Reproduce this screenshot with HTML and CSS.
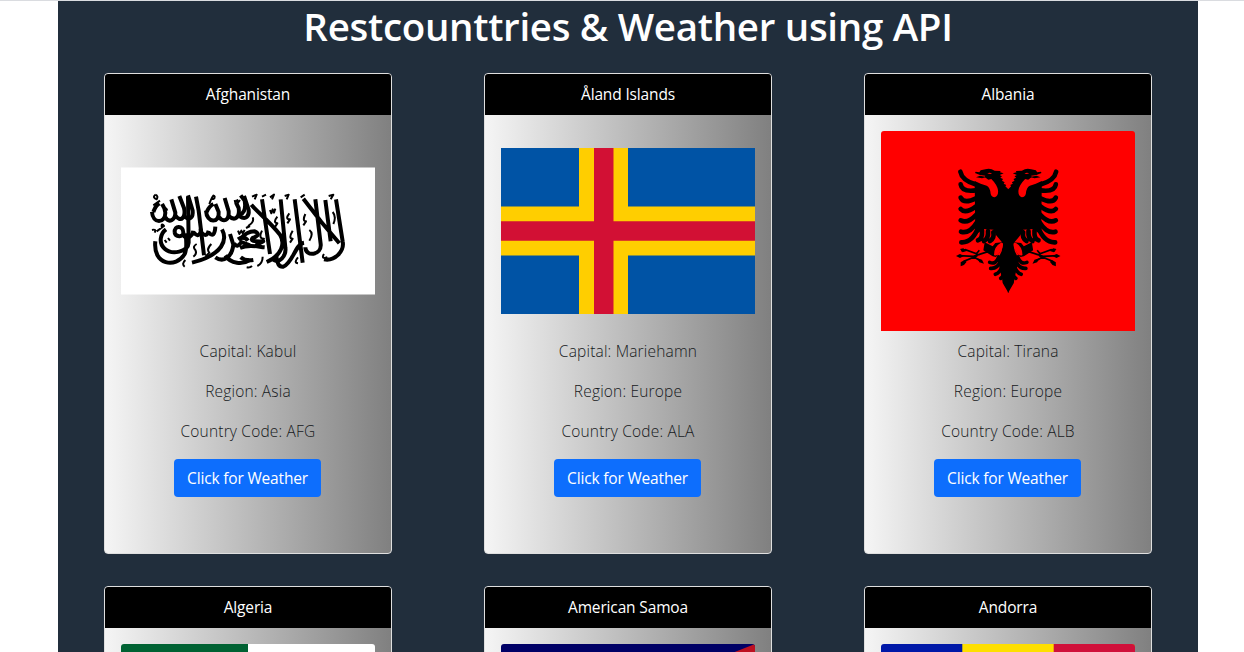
FILE: index.html
```html
<!DOCTYPE html>
<html lang="en">
<head>
<meta charset="utf-8">
<title>Restcounttries &amp; Weather using API</title>
<link rel="stylesheet" href="styles.css">
</head>
<body>
<main class="container">
  <h1 class="title">Restcounttries &amp; Weather using API</h1>
  <div class="grid">
    <article class="card">
      <h2 class="card-header">Afghanistan</h2>
      <div class="card-body">
        <svg class="flag" viewBox="121 167.5 254 127">
          <rect x="121" y="167.5" width="254" height="127" fill="#fff"/>
          <g class="ink" transform="translate(140 180) scale(.33333)">
            <path d="M36 96C38 132 76 132 76 98C76 86 70 78 66 72M58 70Q46 78 40 96M76 112C88 132 106 118 106 98L94 58M106 106C124 132 138 108 132 84L118 48M134 110C150 122 160 112 158 92L144 46"/>
            <path d="M198 92C200 132 240 130 236 96L226 72M220 72Q208 78 200 96M236 110C252 130 268 120 266 94L254 54M266 108C286 126 300 110 296 84L288 68M298 108C318 122 328 108 326 90L312 48"/>
            <path d="M168 50L176 92L192 226M144 50L146 188C144 216 96 226 74 206C54 188 62 160 78 148M46 184C38 256 108 266 134 222C142 206 138 196 138 160"/>
            <path d="M104 158C102 134 130 136 130 158C130 174 106 170 104 158M132 168C144 180 158 166 160 152M162 158Q174 174 182 156L182 146M184 158Q200 174 206 152M206 158Q224 176 226 140"/>
            <path d="M246 148C262 178 252 224 156 248M226 232C252 250 276 230 280 194L270 162M282 190Q292 206 304 186L330 196M294 178Q312 166 324 182M256 226C272 252 308 254 330 240"/>
            <path class="fine" d="M46 44Q36 52 50 58Q56 48 46 44M40 76L60 62M36 150Q50 146 44 158M50 154L72 138Q62 126 66 146M74 180L80 188M84 174L90 182M78 84L82 92M170 192Q156 200 166 210Q172 222 160 230M136 240Q124 252 134 260M214 192Q198 208 208 218L196 230M208 72Q220 38 224 50Q224 60 212 56M284 60L286 68L292 60L294 68L300 60M294 152L298 162L304 152L308 160L314 150M318 144L330 138"/>
          </g>
          <g class="ink" transform="translate(240 180) scale(.33333)">
            <path d="M34 74C52 96 88 124 120 164C136 190 126 226 80 246M66 58L90 222M122 58L136 202C140 228 116 254 98 238M164 58L188 248M190 56L244 126L298 190M226 58L242 192C246 226 196 232 196 202M256 60L272 184M288 58L308 184C314 214 284 244 252 238"/>
            <path d="M192 188C166 192 158 250 130 260C112 262 112 242 108 226M0 104Q20 96 14 62L2 46M0 178Q20 154 44 154Q66 164 38 174Q26 186 70 184L48 196M0 204C26 192 52 200 74 202M2 232Q16 244 40 240"/>
            <path class="fine" d="M36 50L50 44L44 58M66 50L78 44M90 52L102 44L96 58M134 48L146 44L140 58M182 52L194 44M266 48L280 44L272 58M90 90L94 100L98 88L102 98L106 86M112 110Q98 128 112 130L104 142M148 100Q134 118 150 118L142 130M196 102Q186 124 198 124L190 136M158 152Q144 176 158 176L150 188M66 152Q54 176 72 176L60 190M38 112Q44 126 24 138M208 150Q222 160 208 182M278 96Q290 110 280 132M252 222Q242 238 262 232M174 232Q160 248 174 250M52 258Q68 250 68 230M20 262Q30 264 36 258"/>
          </g>
        </svg>
        <p>Capital: Kabul</p>
        <p>Region: Asia</p>
        <p>Country Code: AFG</p>
        <button class="btn">Click for Weather</button>
      </div>
    </article>
    <article class="card">
      <h2 class="card-header">Åland Islands</h2>
      <div class="card-body">
        <svg class="flag" viewBox="0 0 254 166">
          <rect width="254" height="166" fill="#0053a5"/>
          <path fill="#ffce00" d="M78 0h49v58.5h127v49H127V166H78v-58.5H0v-49h78z"/>
          <path fill="#d21034" d="M93 0h19.5v73.3H254v19.4H112.500V166H93V92.700H0V73.300h93z"/>
        </svg>
        <p>Capital: Mariehamn</p>
        <p>Region: Europe</p>
        <p>Country Code: ALA</p>
        <button class="btn">Click for Weather</button>
      </div>
    </article>
    <article class="card">
      <h2 class="card-header">Albania</h2>
      <div class="card-body">
        <svg class="flag" viewBox="881 131 254 200" preserveAspectRatio="none">
          <defs>
            <g id="eagle-half">
              <path d="M206 103L205 103L196 94L199 90L191 86L194 82L186 77L189 72L181 68L186 64L179 60L191 55L180 52L182 48L164 47Q150 38 136 43L122 46L118 52L107 50L105 54L120 60L136 62L134 66L145 74L154 72Q172 90 174 106Q176 122 164 127Q154 126 152 116Q150 96 140 92L122 86L104 78L106 240L130 222L160 224L168 240L186 262Q192 290 172 310L186 370L188 384L205 413H206Z"/>
              <path d="M134 262L158 274L166 264L186 262Q190 282 168 306L158 304L130 286Z"/>
              <path fill="#f00" d="M183 263Q162 274 162 300Q172 306 182 288Q192 274 188 264Z"/>
              <path fill="#f00" d="M142 55q6-4 14 0q-5 4-14 0z"/>
              <g class="feather">
                <path d="M61 50Q66 76 106 88M62 88Q66 112 108 106M62 128Q72 148 108 130M62 162Q76 178 108 154M62 196Q82 208 110 178M63 230Q88 238 112 200M64 262Q98 264 116 214M114 256Q128 252 126 226M132 258Q146 250 144 228M150 258Q164 250 160 232"/>
                <path d="M149 322Q168 330 176 306M152 340Q172 342 182 318M166 358Q180 354 188 330M182 370Q192 364 194 340" stroke-width="11"/>
              </g>
              <path class="claw" d="M144 290L100 304L56 302M120 300L76 284L64 288M112 302L74 318L68 328M98 304L122 318M108 298L118 286"/>
              <path d="M48 303l12-6 12 6-12 6zM60 282l10-2 10 8-12 4zM62 334l0-12 10-6 8 4-8 10zM112 310l14 4 6 12-14-4z"/>
              <path d="M120 62L108 67L126 70L140 66Z"/>
            </g>
          </defs>
          <rect x="881" y="131" width="254" height="200" fill="#f00"/>
          <g transform="translate(940 155) scale(.33333)">
            <use href="#eagle-half"/>
            <use href="#eagle-half" transform="translate(409.500 0) scale(-1 1)"/>
          </g>
        </svg>
        <p>Capital: Tirana</p>
        <p>Region: Europe</p>
        <p>Country Code: ALB</p>
        <button class="btn">Click for Weather</button>
      </div>
    </article>
    <article class="card">
      <h2 class="card-header">Algeria</h2>
      <div class="card-body">
        <svg class="flag" viewBox="0 0 254 200">
          <rect width="254" height="200" fill="#fff"/>
          <rect width="127" height="200" fill="#006233"/>
        </svg>
      </div>
    </article>
    <article class="card">
      <h2 class="card-header">American Samoa</h2>
      <div class="card-body">
        <svg class="flag" viewBox="0 0 254 200">
          <rect width="254" height="200" fill="#006"/>
          <path fill="#bd1021" d="M254 0L0 100L254 200Z"/>
          <path fill="#fff" d="M254 10L16 104L254 198Z"/>
        </svg>
      </div>
    </article>
    <article class="card">
      <h2 class="card-header">Andorra</h2>
      <div class="card-body">
        <svg class="flag" viewBox="0 0 254 200">
          <rect width="254" height="200" fill="#0018a8"/>
          <rect x="81.300" width="172.700" height="200" fill="#fedf00"/>
          <rect x="172.700" width="81.300" height="200" fill="#d0103a"/>
        </svg>
      </div>
    </article>
  </div>
</main>
</body>
</html>
```
FILE: styles.css
```css
* { box-sizing: border-box; }

body {
  margin: 0;
  height: 652px;
  overflow: hidden;
  border-top: 1px solid #dadce0;
  background: #fff;
  color: #16191c;
  font: 300 16px/24px "Open Sans", "Noto Sans", sans-serif;
}

.container {
  width: 1140px;
  height: 651px;
  margin: 0 auto 0 58px;
  overflow: hidden;
  background: #212e3c;
}

.title {
  margin: 0;
  height: 72px;
  padding-top: 1px;
  color: #fff;
  font-size: 38.5px;
  letter-spacing: -0.3px;
  font-weight: 600;
  line-height: 48px;
  text-align: center;
  white-space: nowrap;
}

.grid {
  display: grid;
  grid-template-columns: repeat(3, 380px);
  justify-items: center;
  row-gap: 32px;
}

.card {
  width: 288px;
  height: 481px;
  border: 1px solid #dfdfdf;
  border-radius: 4px;
  overflow: hidden;
  background: linear-gradient(to right, #f5f5f5, #808080);
  text-align: center;
}

.card-header {
  margin: 0;
  height: 41px;
  padding-top: 8px;
  background: #000;
  color: #fff;
  font-size: 15.5px;
  font-weight: 400;
  letter-spacing: -0.15px;
  line-height: 25px;
}

.card-body {
  padding: 16px;
}

.card-body p {
  margin: 0 0 16px;
  font-size: 15.5px;
  letter-spacing: 0.18px;
}

.flag {
  display: block;
  width: 254px;
  height: 200px;
  margin-bottom: 8px;
  border-radius: 3px 3px 0 0;
}

.ink {
  fill: none;
  stroke: #000;
  stroke-width: 12;
  stroke-linejoin: round;
}

.fine { stroke-width: 6; }

.feather {
  fill: none;
  stroke: #000;
  stroke-width: 14;
  stroke-linecap: round;
}

.claw {
  fill: none;
  stroke: #000;
  stroke-width: 5;
}

.btn {
  display: block;
  width: 147px;
  height: 38px;
  margin-left: 53px;
  padding: 0;
  border: 0;
  border-radius: 4px;
  background: #0d6efd;
  color: #fff;
  font: 400 15.5px/24px "Open Sans", "Noto Sans", sans-serif;
  letter-spacing: -0.17px;
}
```
